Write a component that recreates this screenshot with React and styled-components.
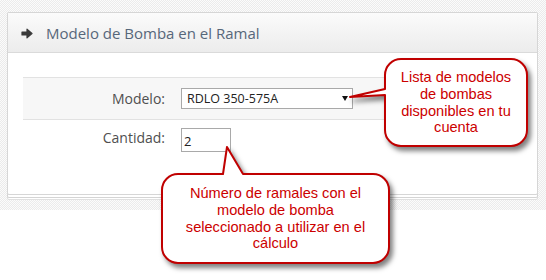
import { createGlobalStyle, styled } from 'styled-components';

const GlobalStyle = createGlobalStyle`
  body {
    margin: 0;
    background: #fff;
    font-family: 'Open Sans', Arial, sans-serif;
  }
`;

const ArrowIcon = () => (
  <StyledArrow viewBox='0 0 12 11' width='12' height='11'>
    <path
      d='M1 4 H6 V1.2 L11 5.5 L6 9.8 V7 H1 Z'
      fill='#3a3a3a'
      stroke='#3a3a3a'
      strokeWidth='1.2'
      strokeLinejoin='round'
    />
  </StyledArrow>
);

const Callout = ({ left, top, width, height, pointer, children }) => {
  const r = 16;
  const w = width;
  const h = height;
  let d;
  if (pointer.side === 'left') {
    const [tx, ty, y1, y2] = pointer.points;
    d = `M ${r} 0 H ${w - r} A ${r} ${r} 0 0 1 ${w} ${r} V ${h - r} A ${r} ${r} 0 0 1 ${w - r} ${h} H ${r} A ${r} ${r} 0 0 1 0 ${h - r} V ${y2} L ${tx} ${ty} L 0 ${y1} V ${r} A ${r} ${r} 0 0 1 ${r} 0 Z`;
  } else {
    const [x1, tx, ty, x2] = pointer.points;
    d = `M ${r} 0 H ${x1} L ${tx} ${ty} L ${x2} 0 H ${w - r} A ${r} ${r} 0 0 1 ${w} ${r} V ${h - r} A ${r} ${r} 0 0 1 ${w - r} ${h} H ${r} A ${r} ${r} 0 0 1 0 ${h - r} V ${r} A ${r} ${r} 0 0 1 ${r} 0 Z`;
  }
  return (
    <StyledCallout style={{ left, top, width, height }}>
      <CalloutShape
        width={w + 100}
        height={h + 100}
        viewBox={`-50 -50 ${w + 100} ${h + 100}`}
      >
        <path d={d} fill='#fff' stroke='#c00000' strokeWidth='2' strokeLinejoin='round' />
      </CalloutShape>
      <CalloutText>{children}</CalloutText>
    </StyledCallout>
  );
};

const App = () => {
  return (
    <>
      <GlobalStyle />
      <StyledPage>
        <StyledStage>
          <StyledPanel>
            <StyledHeader>
              <ArrowIcon />
              <StyledTitle>Modelo de Bomba en el Ramal</StyledTitle>
            </StyledHeader>
            <StyledBody>
              <StyledRow $band>
                <StyledLabel>Modelo:</StyledLabel>
                <StyledSelect>
                  RDLO 350-575A
                  <StyledCaret />
                </StyledSelect>
              </StyledRow>
              <StyledRow>
                <StyledLabel>Cantidad:</StyledLabel>
                <StyledInput readOnly value='2' />
              </StyledRow>
            </StyledBody>
          </StyledPanel>
        </StyledStage>

        <Callout
          left={385}
          top={59}
          width={142}
          height={87}
          pointer={{ side: 'left', points: [-35, 38, 30, 36] }}
        >
          Lista de modelos
          <br />
          de bombas
          <br />
          disponibles en tu
          <br />
          cuenta
        </Callout>
        <Callout
          left={162}
          top={174}
          width={227}
          height={89}
          pointer={{ side: 'top', points: [61, 65, -27, 81] }}
        >
          Número de ramales con el
          <br />
          modelo de bomba
          <br />
          seleccionado a utilizar en el
          <br />
          cálculo
        </Callout>
      </StyledPage>
    </>
  );
};

export default App;

const StyledPage = styled.div`
  position: relative;
  width: 546px;
  height: 280px;
  overflow: hidden;
`;

const StyledStage = styled.div`
  height: 210px;
  padding: 12px 8px 0 7px;
  box-sizing: border-box;
  background-color: #f7f7f7;
  background-image: repeating-conic-gradient(#ebebeb 0 25%, #fbfbfb 0 50%);
  background-size: 2px 2px;
`;

const StyledPanel = styled.div`
  height: 183px;
  box-sizing: border-box;
  background: #fff;
  border: 1px solid #d6d6d6;
  border-radius: 2px;
  box-shadow: 0 3px 0 -1px #fff, 0 3px 0 0 #d4d4d4, 0 5px 0 -1px #fff, 0 5px 0 0 #e0e0e0;
`;

const StyledHeader = styled.div`
  display: flex;
  align-items: center;
  gap: 13px;
  height: 39px;
  padding-left: 13px;
  background: linear-gradient(#fbfbfb, #ececec);
  border-bottom: 1px solid #dadada;
`;

const StyledArrow = styled.svg`
  flex: none;
  margin-top: 1px;
`;

const StyledTitle = styled.span`
  font-size: 15px;
  color: #57677a;
`;

const StyledBody = styled.div`
  padding: 24px 15px 0;
`;

const StyledRow = styled.div`
  display: flex;
  align-items: ${({ $band }) => ($band ? 'center' : 'flex-start')};
  gap: 16px;
  height: ${({ $band }) => ($band ? '41px' : 'auto')};
  padding-top: ${({ $band }) => ($band ? '0' : '8px')};
  background: ${({ $band }) => ($band ? '#f7f7f7' : 'transparent')};
  border-top: ${({ $band }) => ($band ? '1px solid #e2e2e2' : 'none')};
  border-bottom: ${({ $band }) => ($band ? '1px solid #e2e2e2' : 'none')};
`;

const StyledLabel = styled.span`
  width: 142px;
  text-align: right;
  font-size: 14px;
  line-height: 19px;
  color: #4f4f4f;
`;

const StyledSelect = styled.div`
  position: relative;
  width: 172px;
  height: 21px;
  box-sizing: border-box;
  padding-left: 5px;
  border: 1px solid #a9a9a9;
  background: #fff;
  font-size: 12.5px;
  line-height: 19px;
  color: #222;
`;

const StyledCaret = styled.span`
  position: absolute;
  right: 4px;
  top: 7px;
  border-left: 3.5px solid transparent;
  border-right: 3.5px solid transparent;
  border-top: 5px solid #111;
`;

const StyledInput = styled.input`
  width: 50px;
  height: 24px;
  box-sizing: border-box;
  margin: 0;
  padding: 2px 2px 0;
  border: 1px solid #a9a9a9;
  border-radius: 0;
  font-family: 'Open Sans', Arial, sans-serif;
  font-size: 13px;
  color: #222;
  outline: none;
`;

const StyledCallout = styled.div`
  position: absolute;
  display: flex;
  align-items: center;
  justify-content: center;
`;

const CalloutShape = styled.svg`
  position: absolute;
  left: -50px;
  top: -50px;
  overflow: visible;
  filter: drop-shadow(3px 4px 2.5px rgba(0, 0, 0, 0.5));
`;

const CalloutText = styled.div`
  position: relative;
  text-align: center;
  font-family: 'Liberation Sans', Arial, sans-serif;
  font-size: 14.6px;
  line-height: 16.7px;
  color: #cc0000;
`;
